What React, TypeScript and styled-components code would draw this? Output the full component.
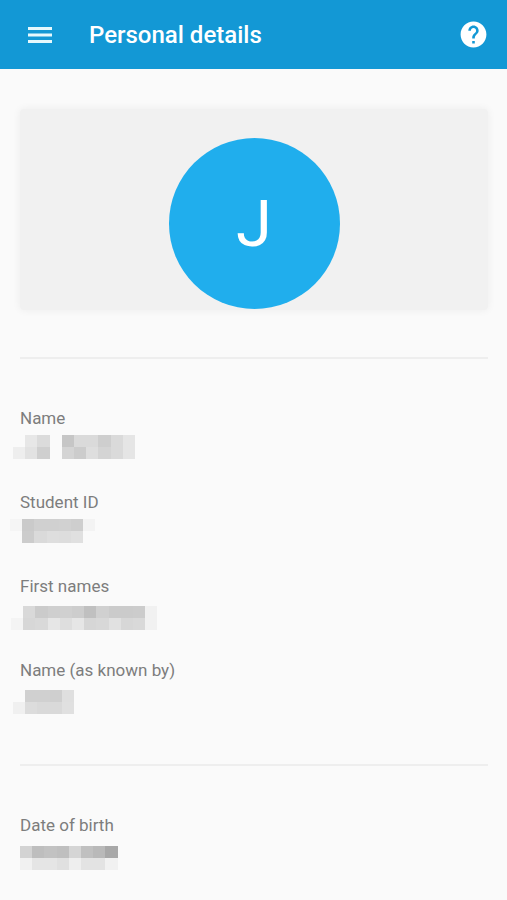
import React from "react";
import styled, { createGlobalStyle } from "styled-components";

const GlobalStyle = createGlobalStyle`
  *, *::before, *::after { box-sizing: border-box; }
  body {
    margin: 0;
    background: #fafafa;
    font-family: Roboto, "Liberation Sans", sans-serif;
  }
`;

const AppBar = styled.header`
  display: flex;
  align-items: center;
  height: 69px;
  padding: 0 18px 0 24px;
  background: #1398d5;
  color: #fff;
`;

const IconButton = styled.button`
  display: flex;
  align-items: center;
  justify-content: center;
  width: 32px;
  height: 32px;
  padding: 0;
  border: 0;
  background: none;
  color: inherit;
  cursor: pointer;
`;

const Title = styled.h1`
  flex: 1;
  margin: 0 0 0 33px;
  font-size: 24px;
  font-weight: 500;
  line-height: 32px;
`;

const Content = styled.main`
  padding: 40px 19px 28px 20px;
`;

const ProfileCard = styled.section`
  display: flex;
  justify-content: center;
  padding: 29px 0 1px;
  border-radius: 4px;
  background: #f1f1f1;
  box-shadow: 0 0 8px rgba(0, 0, 0, 0.06);
`;

const Avatar = styled.div`
  display: flex;
  align-items: center;
  justify-content: center;
  width: 171px;
  height: 171px;
  border-radius: 50%;
  background: #20aeed;
  color: #fff;
  font-size: 65px;
  line-height: 72px;
`;

const Divider = styled.hr`
  height: 2px;
  margin: 47px 0;
  border: 0;
  background: #eeeeee;
`;

const Details = styled.dl`
  display: flex;
  flex-direction: column;
  gap: 25px;
  margin: 0;
`;

const Label = styled.dt`
  color: #7d7d7d;
  font-size: 17px;
  line-height: 24px;
`;

const Value = styled.dd`
  margin: 0 0 0 -20px;
`;

const Mosaic = styled.svg`
  display: block;
`;

interface Redaction {
  x: number;
  y: number;
  rows: [string[], string[]];
}

interface Field {
  label: string;
  value: Redaction;
}

const cells = (list: string) => list.split(" ");

const nameFields: Field[] = [
  {
    label: "Name",
    value: {
      x: 13,
      y: 5,
      rows: [
        cells("- e7e7e7 dbdbdb - c6c6c6 dadada dadada cecece dadada e5e5e5"),
        cells("eeeeee e2e2e2 cfcfcf - d4d4d4 cccccc dedede d4d4d4 dadada e5e5e5"),
      ],
    },
  },
  {
    label: "Student ID",
    value: {
      x: 10,
      y: 5,
      rows: [
        cells("f5f5f5 cacaca d0d0d0 d0d0d0 d1d1d1 cecece f3f3f3"),
        cells("- cccccc dadada dedede dddddd e0e0e0 -"),
      ],
    },
  },
  {
    label: "First names",
    value: {
      x: 11,
      y: 8,
      rows: [
        cells("- d9d9d9 cbcbcb cfcfcf d0d0d0 cdcdcd c0c0c0 d0d0d0 cbcbcb cbcbcb cccccc f1f1f1"),
        cells("f4f4f4 d7d7d7 d9d9d9 e6e6e6 dedede e6e6e6 d6d6d6 d8d8d8 e1e1e1 d7d7d7 d9d9d9 f1f1f1"),
      ],
    },
  },
  {
    label: "Name (as known by)",
    value: {
      x: 13,
      y: 8,
      rows: [
        cells("- d0d0d0 d0d0d0 cfcfcf dfdfdf"),
        cells("f0f0f0 dcdcdc d9d9d9 d9d9d9 e0e0e0"),
      ],
    },
  },
];

const birthFields: Field[] = [
  {
    label: "Date of birth",
    value: {
      x: 20,
      y: 9,
      rows: [
        cells("d3d3d3 bebebe c2c2c2 bfbfbf d5d5d5 c0c0c0 b9b9b9 a8a8a8"),
        cells("f1f1f1 e5e5e5 e5e5e5 e0e0e0 eeeeee e3e3e3 e3e3e3 f1f1f1"),
      ],
    },
  },
];

function RedactedValue({ x, y, rows }: Redaction) {
  const size = 12.2;
  return (
    <Mosaic
      width="180"
      height="35"
      viewBox="0 0 180 35"
      shapeRendering="crispEdges"
      role="img"
      aria-label="Hidden"
    >
      {rows.map((row, r) =>
        row.map((color, c) =>
          color === "-" ? null : (
            <rect
              key={`${r}-${c}`}
              x={x + c * size}
              y={y + r * size}
              width={size}
              height={size}
              fill={`#${color}`}
            />
          )
        )
      )}
    </Mosaic>
  );
}

function FieldList({ fields }: { fields: Field[] }) {
  return (
    <Details>
      {fields.map((field) => (
        <div key={field.label}>
          <Label>{field.label}</Label>
          <Value>
            <RedactedValue {...field.value} />
          </Value>
        </div>
      ))}
    </Details>
  );
}

function MenuIcon() {
  return (
    <svg width="24" height="18" viewBox="0 0 24 18" fill="#e6f8fd" aria-hidden="true">
      <path d="M0 1h24v3H0zM0 7.5h24v3H0zM0 14h24v3H0z" />
    </svg>
  );
}

function HelpIcon() {
  return (
    <svg width="31" height="31" viewBox="0 0 24 24" fill="currentColor" aria-hidden="true">
      <path d="M12 2C6.48 2 2 6.48 2 12s4.48 10 10 10 10-4.48 10-10S17.52 2 12 2zm1 17h-2v-2h2v2zm2.07-7.75l-.9.92C13.45 12.9 13 13.5 13 15h-2v-.5c0-1.1.45-2.1 1.17-2.83l1.24-1.26c.37-.36.59-.86.59-1.41 0-1.1-.9-2-2-2s-2 .9-2 2H8c0-2.21 1.79-4 4-4s4 1.79 4 4c0 .88-.36 1.68-.93 2.25z" />
    </svg>
  );
}

export default function App() {
  return (
    <>
      <GlobalStyle />
      <AppBar>
        <IconButton type="button" aria-label="Open menu">
          <MenuIcon />
        </IconButton>
        <Title>Personal details</Title>
        <IconButton type="button" aria-label="Help">
          <HelpIcon />
        </IconButton>
      </AppBar>
      <Content>
        <ProfileCard>
          <Avatar>J</Avatar>
        </ProfileCard>
        <Divider />
        <FieldList fields={nameFields} />
        <Divider />
        <FieldList fields={birthFields} />
      </Content>
    </>
  );
}
